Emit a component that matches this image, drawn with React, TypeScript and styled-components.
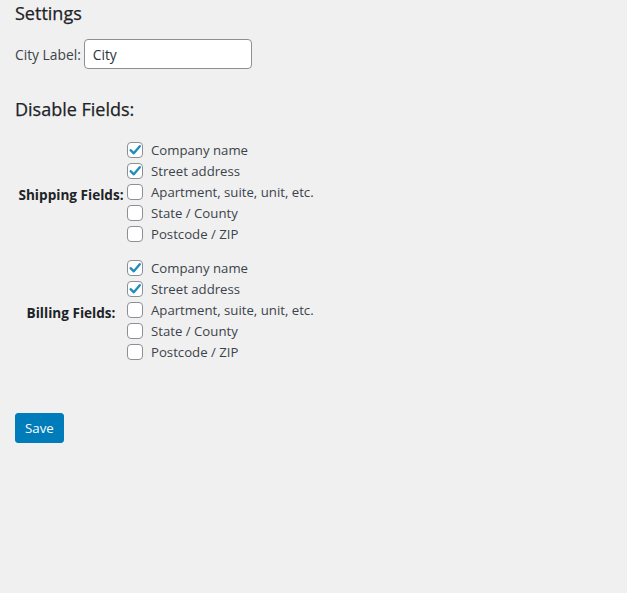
import React, { useState } from "react";
import styled, { createGlobalStyle } from "styled-components";

const GlobalStyle = createGlobalStyle`
  html, body {
    margin: 0;
    padding: 0;
    background: #f0f0f0;
  }
  body {
    font-family: "Open Sans", "Noto Sans", sans-serif;
    font-size: 13px;
    color: #3c434a;
  }
`;

const FIELDS = [
  { id: "company", title: "Company name", checked: true },
  { id: "address_1", title: "Street address", checked: true },
  { id: "address_2", title: "Apartment, suite, unit, etc.", checked: false },
  { id: "state", title: "State / County", checked: false },
  { id: "postcode", title: "Postcode / ZIP", checked: false },
];

export default function App() {
  const [city, setCity] = useState("City");
  const [shipping, setShipping] = useState(FIELDS.map((f) => f.checked));
  const [billing, setBilling] = useState(FIELDS.map((f) => f.checked));

  const toggle = (list: boolean[], set: (v: boolean[]) => void, i: number) => {
    const next = [...list];
    next[i] = !next[i];
    set(next);
  };

  const groups = [
    { id: "shipping", title: "Shipping Fields:", values: shipping, set: setShipping },
    { id: "billing", title: "Billing Fields:", values: billing, set: setBilling },
  ];

  return (
    <Page>
      <GlobalStyle />
      <Heading>Settings</Heading>
      <CityRow>
        <FieldLabel htmlFor="city_label">City Label:</FieldLabel>
        <TextInput id="city_label" value={city} onChange={(e) => setCity(e.target.value)} />
      </CityRow>

      <Heading $spaced>Disable Fields:</Heading>
      <FieldTable>
        <tbody>
          {groups.map((g) => (
            <tr key={g.id}>
              <RowHead>{g.title}</RowHead>
              <td>
                {FIELDS.map((f, i) => (
                  <CheckRow key={f.id}>
                    <Box onClick={() => toggle(g.values, g.set, i)}>{g.values[i] && <Check />}</Box>
                    {f.title}
                  </CheckRow>
                ))}
              </td>
            </tr>
          ))}
        </tbody>
      </FieldTable>

      <SaveButton type="button">Save</SaveButton>
    </Page>
  );
}

function Check() {
  return (
    <svg width="16" height="16" viewBox="0 0 16 16" fill="none">
      <path d="M3.6 8.2 L6.8 11.3 L12.8 4.2" stroke="#1e8cbe" strokeWidth="2.3" strokeLinecap="round" strokeLinejoin="round" />
    </svg>
  );
}

const Page = styled.div`
  padding: 0 15px 40px;
`;

const Heading = styled.h2<{ $spaced?: boolean }>`
  margin: ${(p) => (p.$spaced ? "29px 0 19px" : "0")};
  padding-top: ${(p) => (p.$spaced ? "0" : "2px")};
  font-size: 18px;
  font-weight: 400;
  line-height: 22px;
  color: #1d2327;
  -webkit-text-stroke: 0.25px #1d2327;
`;

const CityRow = styled.div`
  display: flex;
  align-items: center;
  gap: 3px;
  margin-top: 15px;
`;

const FieldLabel = styled.label`
  font-size: 13.8px;
  color: #3c434a;
`;

const TextInput = styled.input`
  box-sizing: border-box;
  width: 168px;
  height: 30px;
  padding: 0 8px;
  border: 1px solid #8c8f94;
  border-radius: 4px;
  background: #fff;
  font-family: inherit;
  font-size: 13.8px;
  color: #2c3338;
  outline: none;
`;

const FieldTable = styled.table`
  border-collapse: collapse;
  border-spacing: 0;

  td {
    padding: 0 0 13px;
  }
`;

const RowHead = styled.th`
  width: 112px;
  padding: 0 0 7px;
  text-align: center;
  vertical-align: middle;
  font-size: 13.6px;
  font-weight: 700;
  color: #1d2327;
`;

const CheckRow = styled.label`
  display: flex;
  align-items: center;
  gap: 8px;
  height: 21px;
  font-size: 13.2px;
  color: #3c434a;
  cursor: pointer;
`;

const Box = styled.span`
  box-sizing: border-box;
  display: flex;
  align-items: center;
  justify-content: center;
  width: 16px;
  height: 16px;
  border: 1px solid #8c8f94;
  border-radius: 4px;
  background: #fff;
  flex-shrink: 0;

  svg {
    margin: -1px;
  }
`;

const SaveButton = styled.button`
  margin-top: 38px;
  height: 30px;
  padding: 0 9px;
  border: 1px solid #007cba;
  border-radius: 3px;
  background: #007cba;
  color: #fff;
  font-family: inherit;
  font-size: 13.3px;
  cursor: pointer;
`;
